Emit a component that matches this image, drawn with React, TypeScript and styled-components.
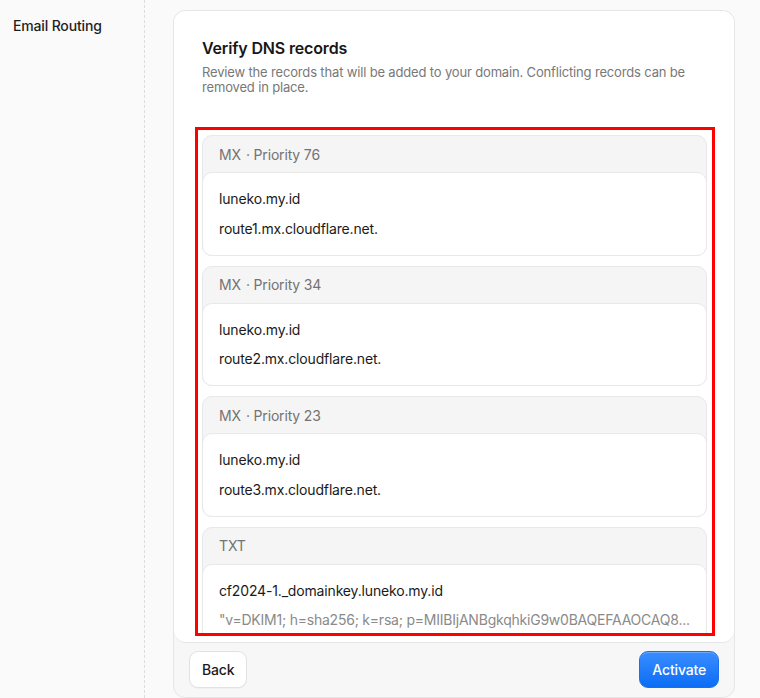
import React from "react";
import styled, { createGlobalStyle } from "styled-components";

const GlobalStyle = createGlobalStyle`
  html, body {
    margin: 0;
    padding: 0;
    background: #fafafa;
    font-family: Inter, "Noto Sans", "Liberation Sans", sans-serif;
    letter-spacing: -0.01em;
    color: #171717;
    -webkit-font-smoothing: antialiased;
  }
  * { box-sizing: border-box; }
`;

const Page = styled.div`
  display: flex;
  height: 698px;
  overflow: hidden;
  background: #fafafa;
`;

const Sidebar = styled.aside`
  width: 145px;
  flex-shrink: 0;
  border-right: 1px dashed #dcdcdc;
  padding: 17px 13px;
`;

const NavItem = styled.div`
  font-size: 14px;
  font-weight: 500;
  line-height: 18px;
  color: #1f1f1f;
`;

const Main = styled.main`
  flex: 1;
  padding: 10px 25px 0 28px;
`;

const Card = styled.section`
  width: 562px;
  height: 688px;
  display: flex;
  flex-direction: column;
  background: #f7f7f7;
  border: 1px solid #e6e6e6;
  border-radius: 12px;
`;

const Panel = styled.div`
  flex: 1;
  min-height: 0;
  display: flex;
  flex-direction: column;
  background: #ffffff;
  border-bottom: 1px solid #e6e6e6;
  border-radius: 12px;
  padding: 27px 22px 8px 24px;
`;

const Header = styled.header`
  padding-left: 4px;
`;

const Title = styled.h2`
  margin: 0;
  font-size: 16px;
  line-height: 20px;
  font-weight: 600;
  color: #171717;
`;

const Description = styled.p`
  margin: 6.5px 0 0;
  font-size: 13px;
  line-height: 15.5px;
  color: #787878;
`;

const ScrollRegion = styled.div`
  margin-top: 34.5px;
  height: 503px;
  overflow: hidden;
  outline: 3px solid #ff0000;
  padding: 5px 5px 0 4px;
  display: flex;
  flex-direction: column;
  gap: 10px;
`;

const Group = styled.div`
  flex-shrink: 0;
  background: #f5f5f5;
  border: 1px solid #e8e8e8;
  border-radius: 10px;
`;

const GroupHeader = styled.div`
  height: 36px;
  display: flex;
  align-items: center;
  padding: 1px 16px 0;
  font-size: 14px;
  line-height: 20px;
  color: #737373;
`;

const Meta = styled.span`
  margin-left: 5px;
`;

const RecordCard = styled.div`
  margin: 0 -1px -1px;
  background: #ffffff;
  border: 1px solid #e8e8e8;
  border-radius: 10px;
  padding: 16px;
  display: flex;
  flex-direction: column;
  gap: 9.5px;
`;

const Line = styled.div<{ $muted?: boolean }>`
  font-size: 14px;
  line-height: 20px;
  color: ${(p) => (p.$muted ? "#8a8a8a" : "#1a1a1a")};
  letter-spacing: ${(p) => (p.$muted ? "-0.016em" : "inherit")};
  white-space: nowrap;
  overflow: hidden;
  text-overflow: ellipsis;
`;

const Footer = styled.footer`
  display: flex;
  justify-content: space-between;
  align-items: center;
  padding: 8px 15px 9px;
`;

const Button = styled.button<{ $primary?: boolean }>`
  height: 37px;
  padding: 0 12px;
  border-radius: 9px;
  font-family: inherit;
  letter-spacing: inherit;
  font-size: 14px;
  font-weight: 500;
  cursor: pointer;
  border: 1px solid ${(p) => (p.$primary ? "#1b6fe8" : "#e2e2e2")};
  color: ${(p) => (p.$primary ? "#ffffff" : "#1a1a1a")};
  background: ${(p) =>
    p.$primary ? "linear-gradient(180deg, #3a8dff 0%, #0b6df6 100%)" : "#ffffff"};
  box-shadow: ${(p) =>
    p.$primary ? "inset 0 1px 0 rgba(255,255,255,0.25)" : "0 1px 1px rgba(0,0,0,0.03)"};
`;

type DnsRecord = { type: string; priority?: number; name: string; value: string; muted?: boolean };

const records: DnsRecord[] = [
  { type: "MX", priority: 76, name: "luneko.my.id", value: "route1.mx.cloudflare.net." },
  { type: "MX", priority: 34, name: "luneko.my.id", value: "route2.mx.cloudflare.net." },
  { type: "MX", priority: 23, name: "luneko.my.id", value: "route3.mx.cloudflare.net." },
  {
    type: "TXT",
    name: "cf2024-1._domainkey.luneko.my.id",
    value: '"v=DKIM1; h=sha256; k=rsa; p=MIIBIjANBgkqhkiG9w0BAQEFAAOCAQ8...',
    muted: true,
  },
];

export default function App() {
  return (
    <>
      <GlobalStyle />
      <Page>
        <Sidebar>
          <NavItem>Email Routing</NavItem>
        </Sidebar>
        <Main>
          <Card>
            <Panel>
              <Header>
                <Title>Verify DNS records</Title>
                <Description>
                  Review the records that will be added to your domain. Conflicting records can be
                  removed in place.
                </Description>
              </Header>
              <ScrollRegion>
                {records.map((r, i) => (
                  <Group key={i}>
                    <GroupHeader>
                      {r.type}
                      {r.priority !== undefined && <Meta>· Priority {r.priority}</Meta>}
                    </GroupHeader>
                    <RecordCard>
                      <Line>{r.name}</Line>
                      <Line $muted={r.muted}>{r.value}</Line>
                    </RecordCard>
                  </Group>
                ))}
              </ScrollRegion>
            </Panel>
            <Footer>
              <Button>Back</Button>
              <Button $primary>Activate</Button>
            </Footer>
          </Card>
        </Main>
      </Page>
    </>
  );
}
